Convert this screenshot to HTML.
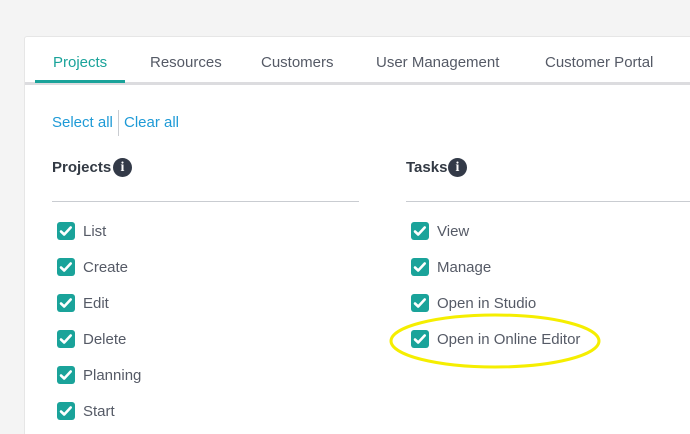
<!DOCTYPE html><html><head><style>
html,body{margin:0;width:690px;height:434px;overflow:hidden}
body{background:#f4f4f4;font-family:"Liberation Sans",sans-serif;position:relative}
.card{position:absolute;left:24px;top:36px;width:666px;height:398px;background:#fff;border-left:1px solid #e6e6e6;border-top:1px solid #e6e6e6;border-radius:3px 0 0 0;overflow:hidden}
.tabs{position:absolute;left:0;top:0;width:100%;height:45px;border-bottom:3px solid #dcdcdf}
.tab{position:absolute;top:17px;font-size:15px;color:#555a66}
.act{color:#1aa39a}
.ul{position:absolute;left:10px;top:43px;width:90px;height:3px;background:#1aa39a}
a{color:#1e9ad6;font-size:15px;position:absolute;top:77px}
.h{position:absolute;top:122px;font-weight:bold;font-size:15px;color:#333a44;line-height:18px}
.i{position:absolute;top:-1px;width:19px;height:19px;border-radius:50%;background:#333a48;color:#fff;font-size:14px;text-align:center;line-height:19px;font-family:"Liberation Serif",serif;font-weight:bold}
.hr{position:absolute;top:164px;height:1px;background:#c9ccd1}
.r{position:absolute;font-size:15px;color:#555a66;height:20px;line-height:20px}
.cb{position:absolute;left:-26px;top:0px;width:18px;height:18px;border-radius:3px;background:#1aa39a}
</style></head><body>
<div class="card">
<div class="tabs">
<span class="tab act" style="left:28px">Projects</span>
<span class="tab" style="left:125px">Resources</span>
<span class="tab" style="left:236px">Customers</span>
<span class="tab" style="left:351px">User Management</span>
<span class="tab" style="left:520px">Customer Portal</span>
<div class="ul"></div>
</div>
<a style="left:27px">Select all</a>
<div style="position:absolute;left:93px;top:73px;width:1px;height:26px;background:#c9ccd1"></div>
<a style="left:99px">Clear all</a>
<div class="h" style="left:27px">Projects<span class="i" style="left:61px">i</span></div>
<div class="h" style="left:381px">Tasks<span class="i" style="left:42px">i</span></div>
<div class="hr" style="left:27px;width:307px"></div>
<div class="hr" style="left:381px;width:300px"></div>
</div>
<svg width="0" height="0" style="position:absolute"><defs><symbol id="c" viewBox="0 0 18 18"><path d="M4 9.5l3.2 3 6.5-7" fill="none" stroke="#fff" stroke-width="2.6" stroke-linecap="round" stroke-linejoin="round"/></symbol></defs></svg>
<div id="rows"></div>
<script>
var L=["List","Create","Edit","Delete","Planning","Start"],R=["View","Manage","Open in Studio","Open in Online Editor"],h="";
L.forEach(function(t,i){h+='<div class="r" style="left:83px;top:'+(222+36*i)+'px"><span class="cb"><svg width="18" height="18"><use href="#c"/></svg></span>'+t+'</div>'});
R.forEach(function(t,i){h+='<div class="r" style="left:437px;top:'+(222+36*i)+'px"><span class="cb"><svg width="18" height="18"><use href="#c"/></svg></span>'+t+'</div>'});
document.getElementById("rows").innerHTML=h;
</script>
<svg style="position:absolute;left:0;top:0" width="690" height="434"><ellipse cx="495" cy="341" rx="104" ry="26" fill="none" stroke="#f5ee00" stroke-width="3"/></svg>
</body></html>
